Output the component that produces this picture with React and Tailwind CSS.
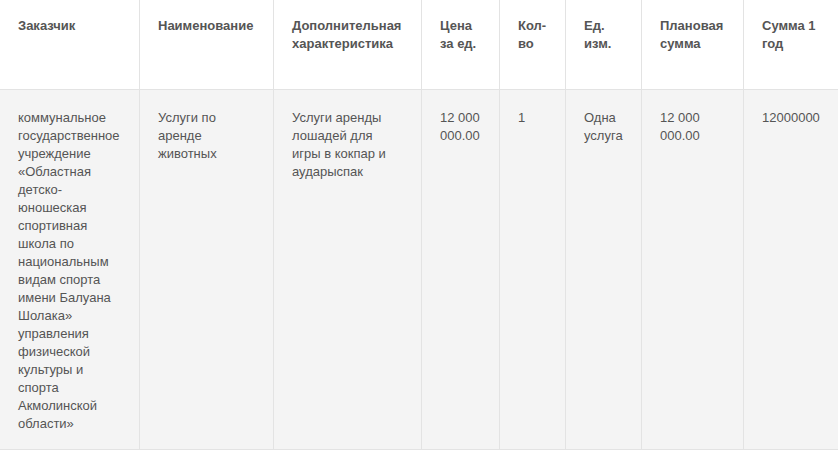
import React from 'react';

const COLUMNS = [
    { title: 'Заказчик', width: 'w-[140px]', pad: 'pr-[20px]' },
    { title: 'Наименование', width: 'w-[134px]', pad: 'pr-[20px]' },
    { title: 'Дополнительная характеристика', width: 'w-[148px]', pad: 'pr-[20px]' },
    { title: 'Цена за ед.', width: 'w-[78px]', pad: 'pr-[12px]' },
    { title: 'Кол-во', width: 'w-[66px]', pad: 'pr-[18px]' },
    { title: 'Ед. изм.', width: 'w-[76px]', pad: 'pr-[14px]' },
    { title: 'Плановая сумма', width: 'w-[102px]', pad: 'pr-[18px]' },
    { title: 'Сумма 1 год', width: 'flex-1', pad: 'pr-[18px]' }
];

const ROW = [
    'коммунальное государственное учреждение «Областная детско-юношеская спортивная школа по национальным видам спорта имени Балуана Шолака» управления физической культуры и спорта Акмолинской области»',
    'Услуги по аренде животных',
    'Услуги аренды лошадей для игры в кокпар и аударыспак',
    '12 000 000.00',
    '1',
    'Одна услуга',
    '12 000 000.00',
    '12000000'
];

export default function App() {
    return (
        <div className="min-h-screen bg-white text-[13px] leading-[18px] text-[#555] font-['Liberation_Sans',Arial,sans-serif]">
            {/* Header */}
            <div className="flex h-[90px] border-b border-[#e3e3e3] bg-white">
                {COLUMNS.map((col, i) => (
                    <div
                        key={col.title}
                        className={`${col.width} ${col.pad} shrink-0 pl-[18px] pt-[17px] font-bold ${i < COLUMNS.length - 1 ? 'border-r border-[#e3e3e3]' : ''}`}
                    >
                        {col.title}
                    </div>
                ))}
            </div>

            {/* Body row */}
            <div className="flex border-b border-[#e3e3e3] bg-[#f4f4f4]">
                {ROW.map((value, i) => (
                    <div
                        key={i}
                        className={`${COLUMNS[i].width} ${COLUMNS[i].pad} shrink-0 pl-[18px] pt-[19px] pb-[16px] ${i < ROW.length - 1 ? 'border-r border-[#e3e3e3]' : ''}`}
                    >
                        {value}
                    </div>
                ))}
            </div>
        </div>
    );
}
